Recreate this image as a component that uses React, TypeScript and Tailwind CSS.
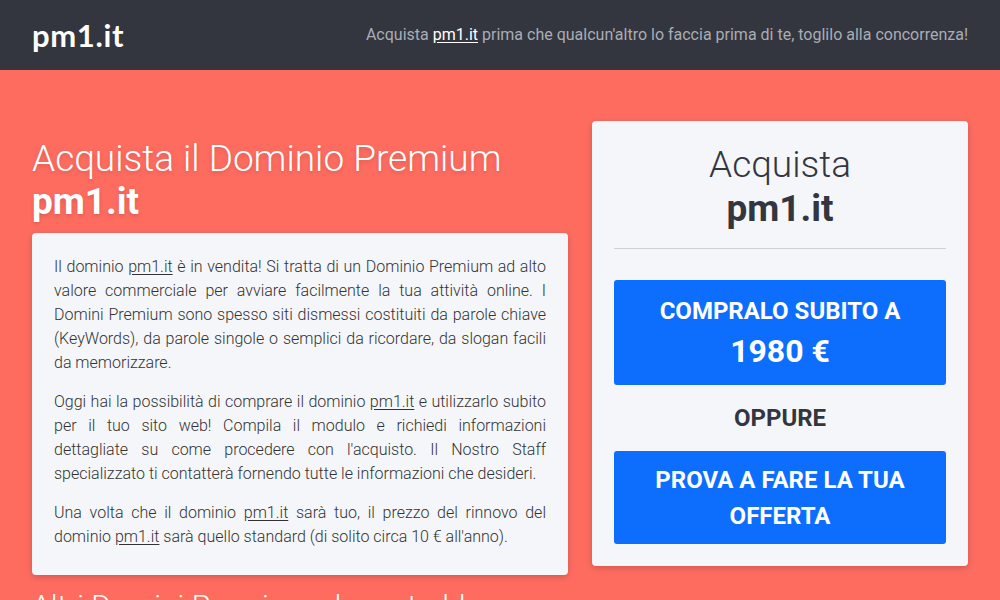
import React from "react";

const font = { fontFamily: "Roboto, 'Liberation Sans', sans-serif" };

function Domain() {
  return <span className="underline underline-offset-2">pm1.it</span>;
}

export default function App() {
  return (
    <div className="min-h-screen bg-[#fe6c60] text-[#333]" style={font}>
      <header className="flex h-[70px] items-center justify-between bg-[#33363f] px-8">
        <span className="text-[31px] font-bold tracking-[0.02em] text-white" style={{ fontFamily: "Lato, 'Noto Sans', sans-serif" }}>
          pm1.it
        </span>
        <p className="text-[16px] text-[#a9adb4]">
          Acquista <span className="text-white underline underline-offset-2">pm1.it</span> prima che qualcun'altro lo faccia prima di te, toglilo alla concorrenza!
        </p>
      </header>

      <main className="mx-auto grid max-w-[960px] grid-cols-[560px_400px] pt-[51px]">
        <section className="px-3">
          <h1 className="pt-[16px] text-[37px] font-light leading-[43px] text-white [text-shadow:0_2px_4px_rgba(0,0,0,0.15)]">
            Acquista il Dominio Premium
            <br />
            <span className="font-bold">pm1.it</span>
          </h1>
          <div className="mt-[10px] rounded bg-[#f5f6f9] px-[22px] pb-[26px] pt-[22px] text-justify text-[16px] font-light leading-6 text-[#333] shadow-[0_2px_6px_rgba(0,0,0,0.18)]">
            <p>
              Il dominio <Domain /> è in vendita! Si tratta di un Dominio Premium ad alto valore commerciale per avviare facilmente la tua attività online. I Domini Premium sono spesso siti dismessi costituiti da parole chiave (KeyWords), da parole singole o semplici da ricordare, da slogan facili da memorizzare.
            </p>
            <p className="mt-[15px]">
              Oggi hai la possibilità di comprare il dominio <Domain /> e utilizzarlo subito per il tuo sito web! Compila il modulo e richiedi informazioni dettagliate su come procedere con l'acquisto. Il Nostro Staff specializzato ti contatterà fornendo tutte le informazioni che desideri.
            </p>
            <p className="mt-[15px]">
              Una volta che il dominio <Domain /> sarà tuo, il prezzo del rinnovo del dominio <Domain /> sarà quello standard (di solito circa 10 € all'anno).
            </p>
          </div>
          <h2 className="mt-[13px] text-[30px] font-light leading-9 text-white">
            Altri Domini Premium che potrebbero interessarti
          </h2>
        </section>

        <aside className="px-3">
          <div className="rounded bg-[#f5f6fa] px-[22px] pb-[22px] pt-[22px] text-center shadow-[0_2px_6px_rgba(0,0,0,0.18)]">
            <h2 className="text-[37px] font-light leading-[44px] text-[#33363f]">
              Acquista
              <br />
              <span className="font-bold">pm1.it</span>
            </h2>
            <hr className="mt-[17px] border-t border-[#cfd1d5]" />
            <button
              className="mt-[31px] flex h-[105px] w-full flex-col items-center justify-center rounded-[3px] bg-[#0d6efd] font-bold uppercase text-white"
              type="button"
            >
              <span className="text-[24px] leading-[36px]">Compralo subito a</span>
              <span className="text-[32px] leading-[44px]">1980 €</span>
            </button>
            <p className="mt-[15px] text-[24px] font-bold leading-[36px] text-[#33363f]">OPPURE</p>
            <button
              className="mt-[15px] flex h-[93px] w-full items-center justify-center rounded-[3px] bg-[#0d6efd] px-8 text-[24px] font-bold uppercase leading-[36px] text-white"
              type="button"
            >
              Prova a fare la tua offerta
            </button>
          </div>
        </aside>
      </main>
    </div>
  );
}
